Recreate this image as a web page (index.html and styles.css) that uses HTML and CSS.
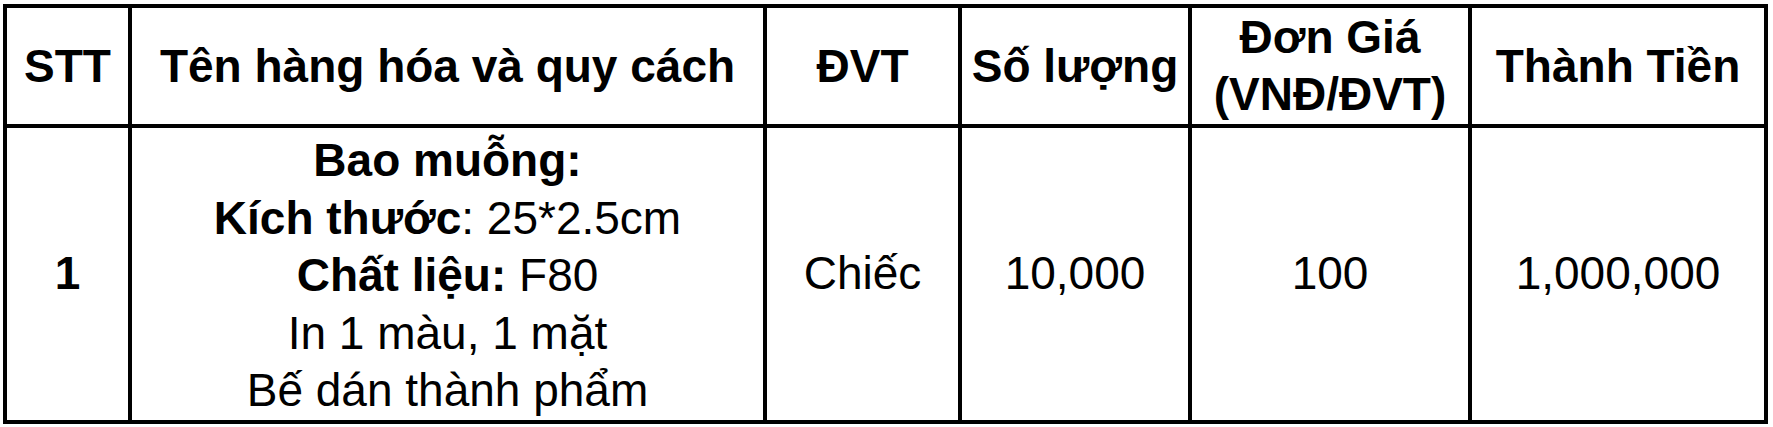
FILE: index.html
```html
<!DOCTYPE html>
<html lang="vi">
<head>
<meta charset="utf-8">
<title>Bảng báo giá</title>
<link rel="stylesheet" href="styles.css">
</head>
<body>
<table class="quote">
  <colgroup>
    <col class="c-stt">
    <col class="c-name">
    <col class="c-unit">
    <col class="c-qty">
    <col class="c-price">
    <col class="c-total">
  </colgroup>
  <thead>
    <tr>
      <th>STT</th>
      <th>Tên hàng hóa và quy cách</th>
      <th>ĐVT</th>
      <th>Số lượng</th>
      <th>Đơn Giá<br>(VNĐ/ĐVT)</th>
      <th>Thành Tiền</th>
    </tr>
  </thead>
  <tbody>
    <tr>
      <td class="bold">1</td>
      <td class="desc">
        <b>Bao muỗng:</b><br>
        <b>Kích thước</b>: 25*2.5cm<br>
        <b>Chất liệu:</b> F80<br>
        In 1 màu, 1 mặt<br>
        Bế dán thành phẩm
      </td>
      <td>Chiếc</td>
      <td>10,000</td>
      <td>100</td>
      <td>1,000,000</td>
    </tr>
  </tbody>
</table>
</body>
</html>
```

FILE: styles.css
```css
html, body {
  margin: 0;
  padding: 0;
  background: #fff;
}

body {
  padding: 4px 0 0 3px;
  font-family: "Liberation Sans", Arial, sans-serif;
  color: #000;
}

.quote {
  border-collapse: separate;
  border-spacing: 0;
  table-layout: fixed;
  width: 1765px;
  border-top: 4px solid #000;
  border-left: 4px solid #000;
}

.c-stt { width: 125px; }
.c-name { width: 635px; }
.c-unit { width: 195px; }
.c-qty { width: 230px; }
.c-price { width: 280px; }
.c-total { width: 296px; }

.quote th,
.quote td {
  box-sizing: border-box;
  border-right: 4px solid #000;
  border-bottom: 4px solid #000;
  padding: 0;
  text-align: center;
  vertical-align: middle;
  font-size: 46px;
  line-height: 57px;
}

.quote th {
  height: 120px;
  font-weight: bold;
}

.quote td {
  height: 294px;
  font-weight: normal;
}

.quote td.desc {
  padding-top: 4px;
  line-height: 57.5px;
}

.quote td.bold {
  font-weight: bold;
}
```
